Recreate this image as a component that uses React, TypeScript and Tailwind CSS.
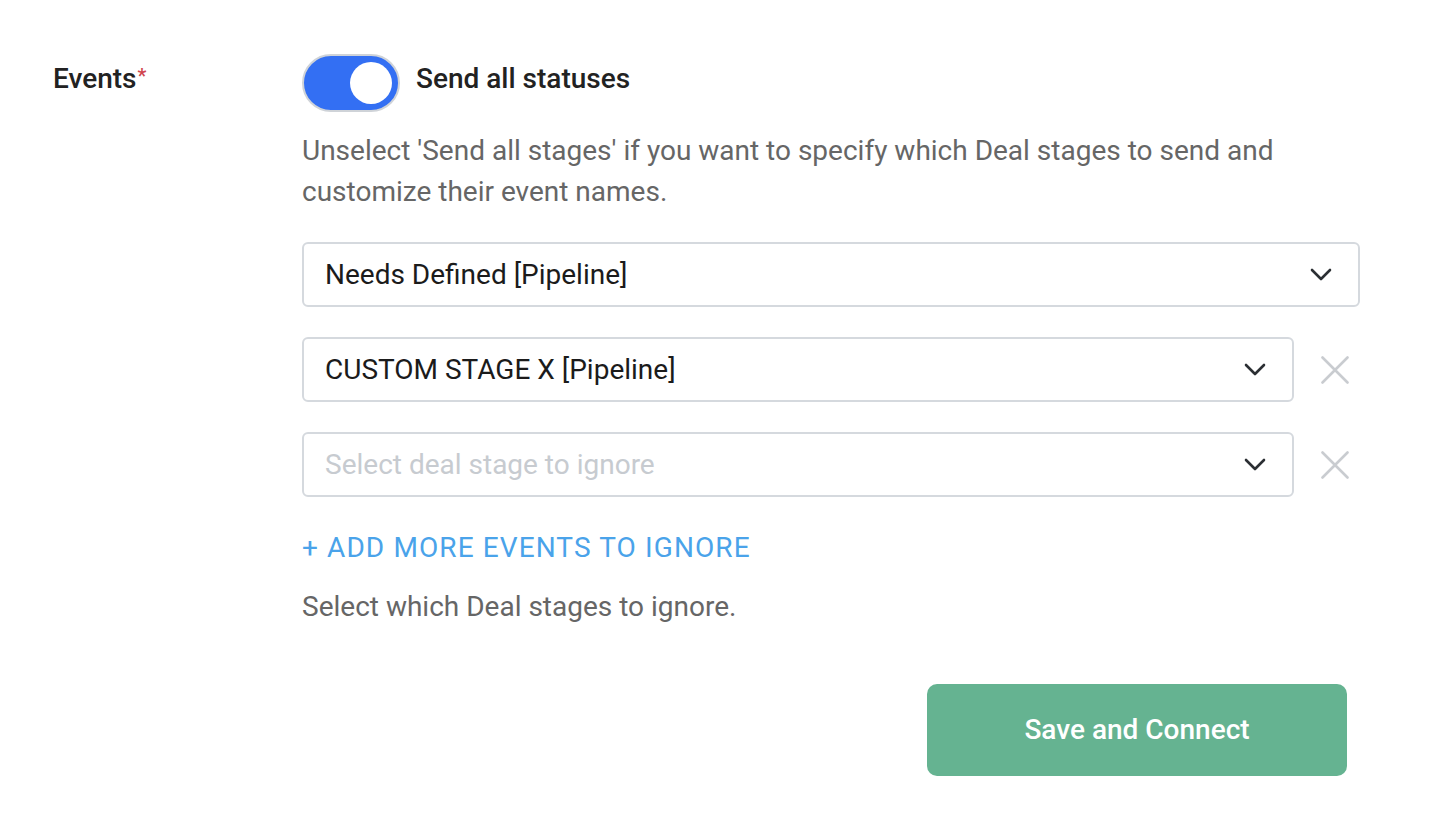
import { useState } from "react";

type StageSelectProps = {
  value?: string;
  placeholder?: string;
  removable?: boolean;
};

function Chevron() {
  return (
    <svg width="22" height="13" viewBox="0 0 22 13" fill="none" aria-hidden="true">
      <path d="M2 2l9 9 9-9" stroke="#2b2f33" strokeWidth="2.6" strokeLinecap="round" strokeLinejoin="round" />
    </svg>
  );
}

function RemoveIcon() {
  return (
    <svg width="28" height="28" viewBox="0 0 28 28" fill="none" aria-hidden="true">
      <path d="M1.5 1.5l25 25M26.5 1.5l-25 25" stroke="#c9ccd0" strokeWidth="2.6" strokeLinecap="round" />
    </svg>
  );
}

function StageSelect({ value, placeholder, removable = false }: StageSelectProps) {
  return (
    <div className="flex items-center">
      <button
        type="button"
        className="flex h-[65px] flex-1 items-center justify-between rounded-[6px] border-2 border-[#d5d9de] bg-white pl-[21px] pr-[26px] text-left"
      >
        {value ? (
          <span className="text-[28px] text-[#1b1b1b]">{value}</span>
        ) : (
          <span className="text-[28px] text-[#c7cbd0]">{placeholder}</span>
        )}
        <Chevron />
      </button>
      {removable ? (
        <button type="button" className="flex w-[66px] shrink-0 items-center justify-center pl-[16px]" aria-label="Remove">
          <RemoveIcon />
        </button>
      ) : null}
    </div>
  );
}

export default function App() {
  const [sendAll, setSendAll] = useState(true);

  return (
    <div className="min-h-[832px] bg-white font-['Roboto',sans-serif]">
      <div className="flex pl-[53px] pr-[84px] pt-[54px]">
        <div className="w-[249px] shrink-0 pt-[4px]">
          <span className="text-[28px] font-medium text-[#222]">
            Events<sup className="relative -top-[5px] ml-[1px] text-[20px] text-[#d0454e]">*</sup>
          </span>
        </div>

        <div className="flex-1">
          <div className="flex items-center gap-[16px]">
            <button
              type="button"
              onClick={() => setSendAll(!sendAll)}
              className={`flex h-[58px] w-[98px] items-center rounded-full border-2 border-[#cfd3d8] px-[6px] ${
                sendAll ? "justify-end bg-[#336ff3]" : "justify-start bg-[#e5e7eb]"
              }`}
              aria-pressed={sendAll}
            >
              <span className="h-[42px] w-[42px] rounded-full bg-white" />
            </button>
            <span className="-mt-[9px] text-[28px] font-medium text-[#222]">Send all statuses</span>
          </div>

          <p className="mt-[18px] text-[28px] leading-[41px] text-[#666]">
            Unselect 'Send all stages' if you want to specify which Deal stages to send and customize their event names.
          </p>

          <div className="mt-[30px] flex flex-col gap-[30px]">
            <StageSelect value="Needs Defined [Pipeline]" />
            <StageSelect value="CUSTOM STAGE X [Pipeline]" removable />
            <StageSelect placeholder="Select deal stage to ignore" removable />
          </div>

          <button type="button" className="mt-[30px] block text-[28px] leading-[41px] tracking-[1.1px] text-[#4aa3ea]">
            + ADD MORE EVENTS TO IGNORE
          </button>

          <p className="mt-[18px] text-[28px] leading-[41px] text-[#666]">Select which Deal stages to ignore.</p>

          <div className="mt-[57px] flex justify-end pr-[13px]">
            <button
              type="button"
              className="h-[92px] w-[420px] rounded-[10px] bg-[#65b391] text-[28px] font-medium text-white"
            >
              Save and Connect
            </button>
          </div>
        </div>
      </div>
    </div>
  );
}
